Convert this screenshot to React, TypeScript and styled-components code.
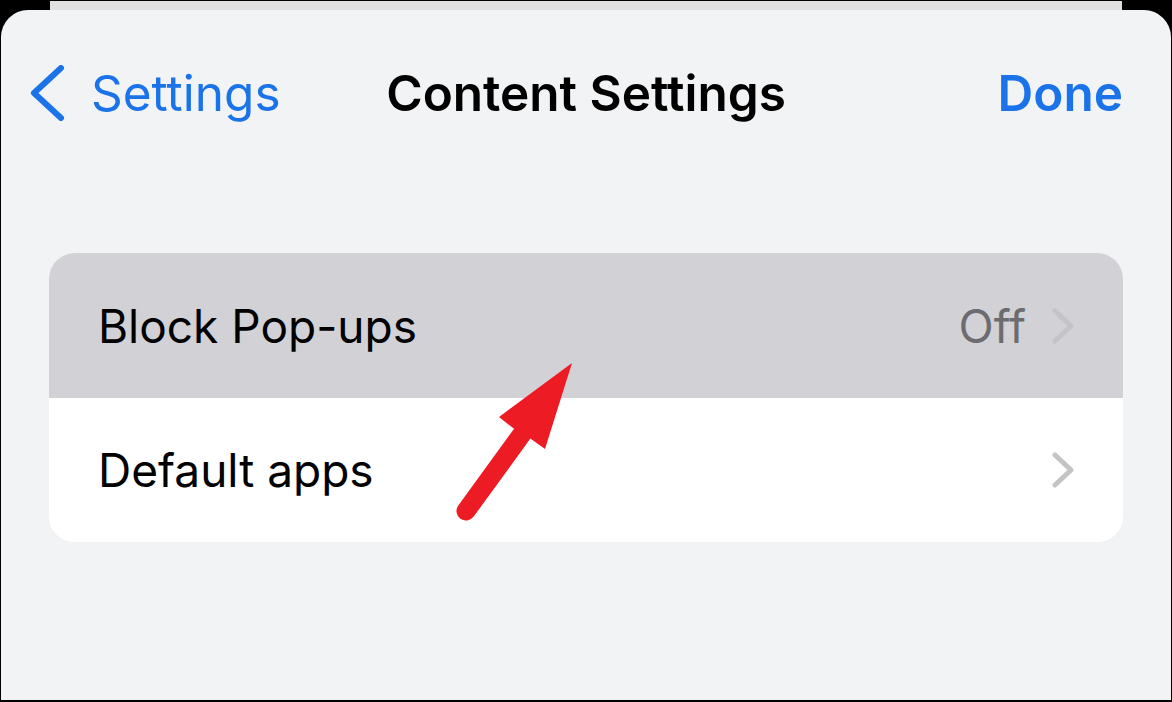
import React from "react";
import styled, { createGlobalStyle } from "styled-components";

const GlobalStyle = createGlobalStyle`
  html, body { margin: 0; padding: 0; background: #000; }
  * { box-sizing: border-box; }
`;

const Frame = styled.div`
  position: relative;
  width: 1172px;
  height: 702px;
  background: #000;
  padding: 1px 1px 2px 1px;
  display: flex;
  flex-direction: column;
  font-family: Inter, "Liberation Sans", sans-serif;
  overflow: hidden;
`;

const Strip = styled.div`
  height: 9px;
  margin: 0 49px 0 49px;
  background: #e0e0e0;
  flex: none;
`;

const Sheet = styled.div`
  flex: 1;
  background: #f2f3f5;
  border-radius: 27px 27px 0 0;
  display: flex;
  flex-direction: column;
`;

const NavBar = styled.div`
  padding: 53px 48px 0 48px;
  display: grid;
  grid-template-columns: 1fr auto 1fr;
  align-items: center;
  line-height: 60px;
`;

const BackButton = styled.div`
  display: flex;
  align-items: center;
  gap: 26px;
  margin-left: -20px;
  color: #1a73e8;
  font-size: 49.5px;
  font-weight: 400;
  justify-self: start;
`;

const Title = styled.div`
  font-size: 49.5px;
  font-weight: 600;
  color: #000;
`;

const DoneButton = styled.div`
  justify-self: end;
  color: #1a73e8;
  font-size: 49.5px;
  font-weight: 600;
`;

const Card = styled.div`
  margin: 130px 48px 0 48px;
  border-radius: 26px;
  overflow: hidden;
  background: #fff;
`;

const Row = styled.div<{ $pressed?: boolean }>`
  height: ${(p) => (p.$pressed ? "145px" : "144px")};
  display: flex;
  align-items: center;
  padding: 0 49px 0 49px;
  background: ${(p) => (p.$pressed ? "#d1d1d6" : "#fff")};
`;

const Label = styled.div`
  flex: 1;
  font-size: 46px;
  color: #000;
`;

const Detail = styled.div`
  font-size: 46px;
  color: #6c6c70;
  margin-right: 26px;
`;

const ArrowOverlay = styled.svg`
  position: absolute;
  left: 0;
  top: 0;
  pointer-events: none;
`;

const Chevron = () => (
  <svg width="22" height="36" viewBox="0 0 22 36">
    <polyline
      points="3,3 19,18 3,33"
      fill="none"
      stroke="#c4c4c7"
      strokeWidth="5"
      strokeLinecap="round"
      strokeLinejoin="round"
    />
  </svg>
);

const BackChevron = () => (
  <svg width="36" height="56" viewBox="0 0 36 56">
    <polyline
      points="32,3 5,28 32,53"
      fill="none"
      stroke="#1a73e8"
      strokeWidth="6"
      strokeLinecap="round"
      strokeLinejoin="round"
    />
  </svg>
);

export default function App() {
  return (
    <>
      <GlobalStyle />
      <Frame>
        <Strip />
        <Sheet>
          <NavBar>
            <BackButton>
              <BackChevron />
              <span>Settings</span>
            </BackButton>
            <Title>Content Settings</Title>
            <DoneButton>Done</DoneButton>
          </NavBar>
          <Card>
            <Row $pressed>
              <Label>Block Pop-ups</Label>
              <Detail>Off</Detail>
              <Chevron />
            </Row>
            <Row>
              <Label>Default apps</Label>
              <Chevron />
            </Row>
          </Card>
        </Sheet>
        <ArrowOverlay width="1172" height="702" viewBox="0 0 1172 702">
          <line
            x1="522"
            y1="434"
            x2="466"
            y2="511"
            stroke="#ed1c24"
            strokeWidth="19"
            strokeLinecap="round"
          />
          <polygon
            points="572,363 545,449 531,439 513,428 499,417"
            fill="#ed1c24"
          />
        </ArrowOverlay>
      </Frame>
    </>
  );
}
